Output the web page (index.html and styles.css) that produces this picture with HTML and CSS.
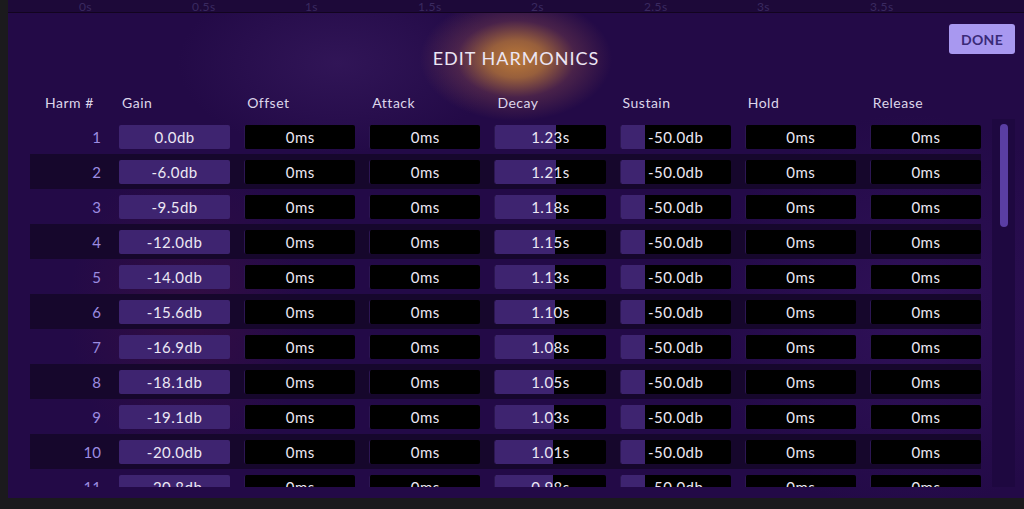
FILE: index.html
```html
<!DOCTYPE html>
<html>
  <head>
    <meta name="viewport" content="width=device-width, initial-scale=1" />
    <link rel="stylesheet" href="styles.css">
  </head>
  <body>
    <div class="app">
      <div class="timeline">
        <span>0s</span><span>0.5s</span><span>1s</span><span>1.5s</span>
        <span>2s</span><span>2.5s</span><span>3s</span><span>3.5s</span>
      </div>

      <div class="dialog">
        <div class="header">
          <div></div>
          <h1 class="title">EDIT HARMONICS</h1>
          <button type="button" class="done">DONE</button>
        </div>

        <div class="cols">
          <span class="harm">Harm #</span>
          <span>Gain</span>
          <span>Offset</span>
          <span>Attack</span>
          <span>Decay</span>
          <span>Sustain</span>
          <span>Hold</span>
          <span>Release</span>
        </div>

        <div class="listwrap">
          <div class="list" id="list"></div>
          <div class="track"><div class="thumb"></div></div>
        </div>
      </div>
    </div>

    <script>
      var gains = ["0.0", "-6.0", "-9.5", "-12.0", "-14.0", "-15.6", "-16.9", "-18.1", "-19.1", "-20.0", "-20.8"];
      var decays = ["1.23", "1.21", "1.18", "1.15", "1.13", "1.10", "1.08", "1.05", "1.03", "1.01", "0.98"];
      var decayFill = [61, 61, 61, 60, 60, 60, 59, 59, 59, 58, 58];
      var list = document.getElementById("list");
      var html = "";
      for (var i = 0; i < gains.length; i++) {
        html += '<div class="row">' +
          '<span class="num">' + (i + 1) + '</span>' +
          '<span class="box filled">' + gains[i] + 'db</span>' +
          '<span class="box">0ms</span>' +
          '<span class="box">0ms</span>' +
          '<span class="box"><i class="fill" style="width:' + decayFill[i] + 'px"></i><b>' + decays[i] + 's</b></span>' +
          '<span class="box"><i class="fill" style="width:24px"></i><b>-50.0db</b></span>' +
          '<span class="box">0ms</span>' +
          '<span class="box">0ms</span>' +
          '</div>';
      }
      list.innerHTML = html;
    </script>
  </body>
</html>
```

FILE: styles.css
```css
html, body {
  margin: 0;
  height: 100%;
  background: #1b1a1d;
}

body {
  font-family: Lato, "Noto Sans", sans-serif;
  color: #e9e4f2;
  overflow: hidden;
}

.app {
  margin-left: 8px;
}

.timeline {
  height: 12px;
  overflow: hidden;
  display: flex;
  padding-left: 71px;
  background: #1d0939;
  border-bottom: 1px solid #12041f;
  font-size: 12px;
  line-height: 12px;
  color: #3a2960;
  letter-spacing: 0.4px;
}

.timeline span {
  width: 113px;
  flex: none;
  margin-top: 1px;
}

.dialog {
  height: 485px;
  box-sizing: border-box;
  padding: 11px 9px 11px 22px;
  background:
    radial-gradient(ellipse 96px 62px at 508px 46px, rgba(186, 120, 56, 1) 0%, rgba(172, 110, 58, 0.85) 30%, rgba(130, 70, 78, 0.4) 62%, rgba(60, 20, 90, 0) 100%),
    radial-gradient(ellipse 160px 90px at 330px 50px, rgba(60, 30, 100, 0.55), rgba(60, 30, 100, 0)),
    radial-gradient(ellipse 120px 160px at 180px 300px, rgba(80, 20, 60, 0.35), rgba(80, 20, 60, 0)),
    radial-gradient(ellipse 200px 200px at 900px 300px, rgba(70, 30, 120, 0.35), rgba(70, 30, 120, 0)),
    #230a47;
}

.header {
  height: 44px;
  display: grid;
  grid-template-columns: 1fr auto 1fr;
}

.title {
  margin: 0 0 0 -13px;
  align-self: end;
  font-size: 18px;
  line-height: 20px;
  font-weight: 400;
  letter-spacing: 1px;
  color: #ece6f4;
}

.done {
  justify-self: end;
  align-self: start;
  width: 66px;
  height: 30px;
  padding: 0;
  border: none;
  border-radius: 3px;
  background: #a898f0;
  color: #3a2a78;
  font-family: Lato, "Noto Sans", sans-serif;
  font-size: 14px;
  font-weight: 700;
  letter-spacing: 0.3px;
}

.cols {
  margin-top: 26px;
  width: 951px;
  display: grid;
  grid-template-columns: 75px repeat(7, 1fr);
  column-gap: 14px;
  font-size: 14px;
  line-height: 18px;
  letter-spacing: 0.5px;
  color: #ddd6ea;
}

.cols span {
  padding-left: 3px;
}

.cols .harm {
  padding-left: 15px;
}

.listwrap {
  margin-top: 7px;
  height: 368px;
  display: flex;
  gap: 11px;
}

.list {
  width: 951px;
  overflow: hidden;
}

.row {
  height: 35px;
  display: grid;
  grid-template-columns: 75px repeat(7, 1fr);
  column-gap: 14px;
  align-items: center;
}

.row:nth-child(even) {
  background: #16072c;
}

.num {
  text-align: right;
  padding-right: 4px;
  font-size: 15px;
  color: #9c8ce0;
}

.box {
  position: relative;
  height: 24px;
  margin-top: 1px;
  border-radius: 2px;
  background: #000;
  border-left: 1px solid #2c1652;
  box-sizing: border-box;
  font-size: 15px;
  line-height: 24px;
  letter-spacing: 0.5px;
  text-align: center;
  color: #ece8f4;
  overflow: hidden;
}

.box.filled {
  background: #3e2470;
  border-left: none;
}

.fill {
  position: absolute;
  left: 0;
  top: 0;
  bottom: 0;
  background: #3e2470;
}

.box b {
  position: relative;
  font-weight: 400;
}

.track {
  width: 23px;
  background: #1e0840;
  padding-top: 5px;
}

.thumb {
  width: 8px;
  height: 103px;
  margin-left: 8px;
  border-radius: 4px;
  background: #5a3ea3;
}
```
